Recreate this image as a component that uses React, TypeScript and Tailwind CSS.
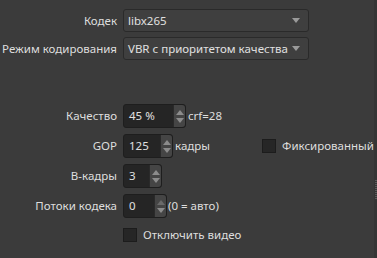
import React from 'react'

const font = { fontFamily: '"Noto Sans", "Open Sans", sans-serif' }

function Combo({ value }: { value: string }) {
  return (
    <div className="flex items-center justify-between w-[186px] h-[23px] rounded-[3px] border border-[#2a2a2a] bg-[#3f3f3f] pl-[4px] pr-[8px] text-[#e0e0e0]">
      <span className="whitespace-nowrap">{value}</span>
      <svg width="8" height="5" viewBox="0 0 8 5">
        <path d="M0 0 H8 L4 5 Z" fill="#9a9a9a" />
      </svg>
    </div>
  )
}

function Spin({ value, width, dim }: { value: string; width: string; dim?: boolean }) {
  return (
    <div className={`flex h-[24px] rounded-[3px] border border-[#1e1e1e] bg-[#252525] text-[#e0e0e0] ${width}`}>
      <div className="flex-1 flex items-center pl-[5px]">{value}</div>
      <div className="flex flex-col items-center justify-center gap-[3px] w-[12px] rounded-r-[3px] bg-[#454545] border-l border-[#2a2a2a]">
        <svg width="8" height="5" viewBox="0 0 8 5">
          <path d="M0 5 H8 L4 0 Z" fill={dim ? '#6a6a6a' : '#8c8c8c'} />
        </svg>
        <svg width="8" height="5" viewBox="0 0 8 5">
          <path d="M0 0 H8 L4 5 Z" fill="#8c8c8c" />
        </svg>
      </div>
    </div>
  )
}

function Box() {
  return <div className="w-[14px] h-[14px] border border-[#1c1c1c] bg-[#262626]" />
}

function Row({ label, children, className = '' }: { label: string; children: React.ReactNode; className?: string }) {
  return (
    <div className={`grid grid-cols-[117px_1fr] gap-x-[6px] items-center ${className}`}>
      <div className="text-right text-[#dedede] whitespace-nowrap">{label}</div>
      <div className="flex items-center">{children}</div>
    </div>
  )
}

export default function App() {
  return (
    <div className="flex w-[377px] h-[258px] bg-[#3b3b3b] text-[11.5px] overflow-hidden" style={font}>
      <div className="flex-1 flex flex-col pt-[9px]">
        <Row label="Кодек">
          <Combo value="libx265" />
        </Row>
        <Row label="Режим кодирования" className="mt-[5px]">
          <Combo value="VBR с приоритетом качества" />
        </Row>

        <Row label="Качество" className="mt-[44px]">
          <Spin value="45 %" width="w-[63px]" />
          <span className="ml-[2px] text-[#dedede]">crf=28</span>
        </Row>
        <Row label="GOP" className="mt-[6px]">
          <Spin value="125" width="w-[50px]" />
          <span className="ml-[2px] text-[#dedede]">кадры</span>
          <div className="ml-[52px] flex items-center gap-[6px]">
            <Box />
            <span className="text-[#dedede] whitespace-nowrap">Фиксированный</span>
          </div>
        </Row>
        <Row label="B-кадры" className="mt-[6px]">
          <Spin value="3" width="w-[39px]" />
        </Row>
        <Row label="Потоки кодека" className="mt-[6px]">
          <Spin value="0" width="w-[44px]" dim />
          <span className="ml-[1px] text-[#dedede]">(0 = авто)</span>
        </Row>
        <Row label="" className="mt-[8px]">
          <div className="flex items-center gap-[6px]">
            <Box />
            <span className="text-[#dedede]">Отключить видео</span>
          </div>
        </Row>
      </div>
      <div className="w-[7px] shrink-0 bg-[#353535] flex flex-col items-center pt-[180px]">
        <div className="flex flex-col gap-[1px]">
          {[0, 1, 2, 3, 4, 5, 6, 7, 8, 9].map(i => (
            <div key={i} className="w-[4px] h-[1px] bg-[#5a5a5a]" />
          ))}
        </div>
      </div>
    </div>
  )
}
